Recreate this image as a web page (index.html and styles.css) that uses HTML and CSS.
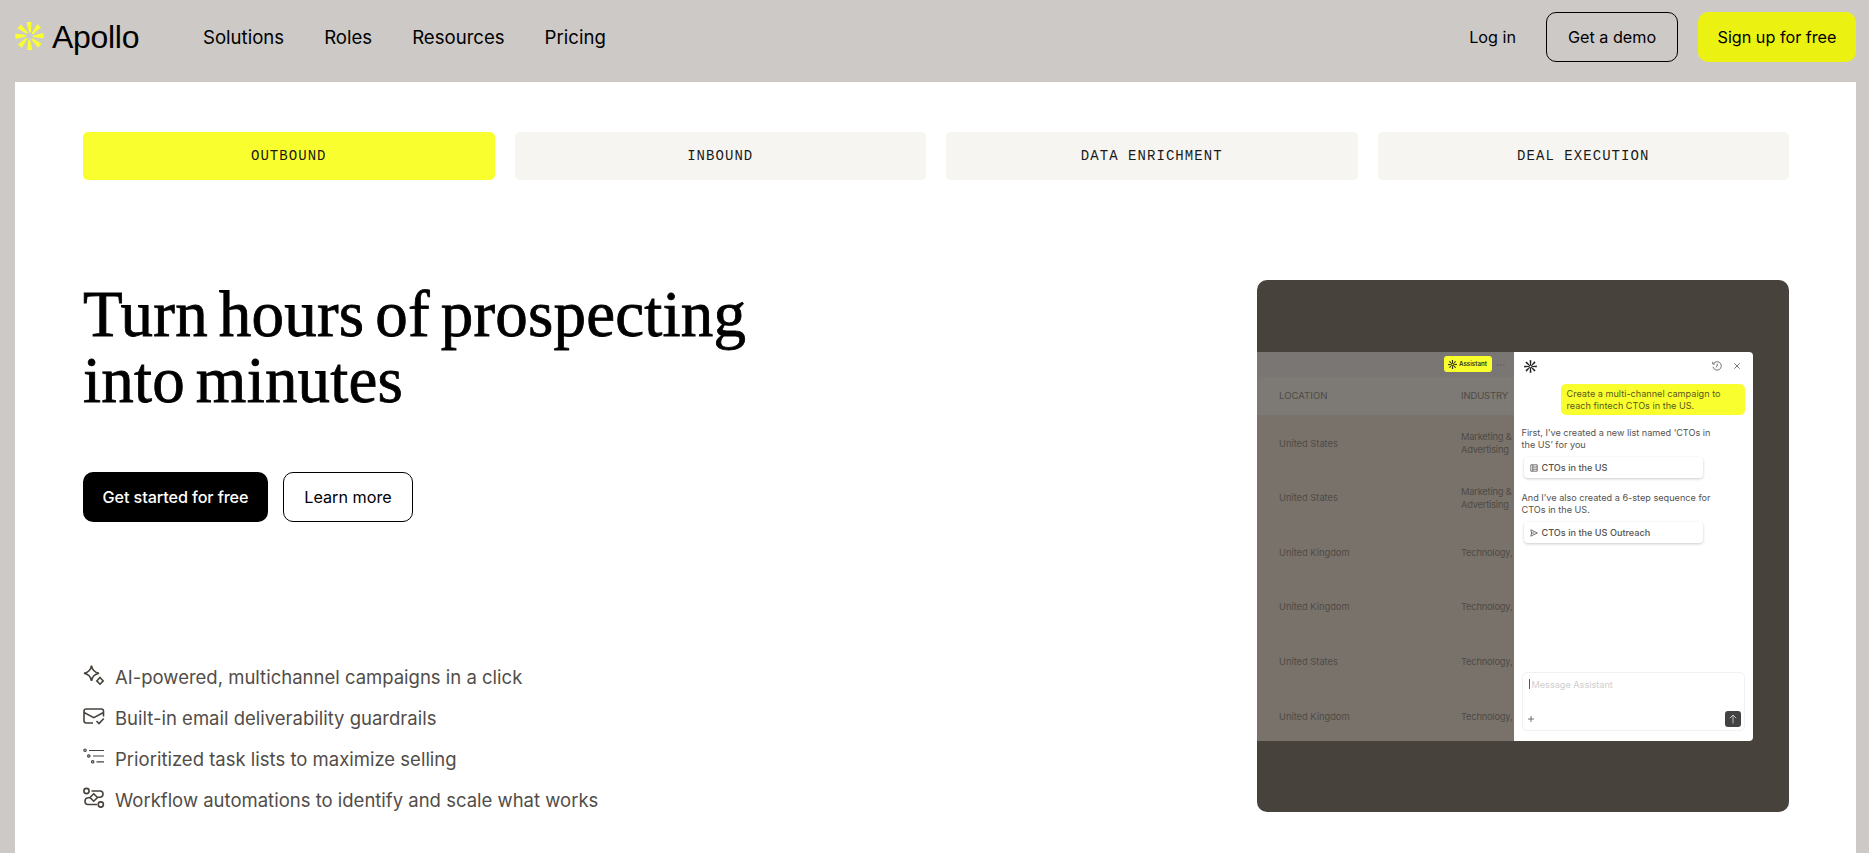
FILE: index.html
```html
<!DOCTYPE html>
<html lang="en">

<head>
    <meta charset="utf-8">
    <title>Apollo</title>
    <meta name="viewport" content="width=device-width, initial-scale=1">
    <link rel="stylesheet" href="styles.css">
</head>

<body>
<svg class="sprite" width="0" height="0">
    <defs>
        <path id="ray" d="M-3.1 -14.6 L2.2 -14.6 L1.3 -4.2 Q.6 -2.9 -.4 -3.6 Z"/>
        <path id="thin-ray" d="M-2.2 -14.6 L2 -14.6 L1.2 -2 L-.8 -2 Z"/>
        <symbol id="burst" viewBox="-15 -15 30 30">
            <use href="#ray"/>
            <use href="#ray" transform="rotate(45)"/>
            <use href="#ray" transform="rotate(90)"/>
            <use href="#ray" transform="rotate(135)"/>
            <use href="#ray" transform="rotate(180)"/>
            <use href="#ray" transform="rotate(225)"/>
            <use href="#ray" transform="rotate(270)"/>
            <use href="#ray" transform="rotate(315)"/>
        </symbol>
        <symbol id="burst-small" viewBox="-15 -15 30 30">
            <use href="#thin-ray"/>
            <use href="#thin-ray" transform="rotate(45)"/>
            <use href="#thin-ray" transform="rotate(90)"/>
            <use href="#thin-ray" transform="rotate(135)"/>
            <use href="#thin-ray" transform="rotate(180)"/>
            <use href="#thin-ray" transform="rotate(225)"/>
            <use href="#thin-ray" transform="rotate(270)"/>
            <use href="#thin-ray" transform="rotate(315)"/>
        </symbol>
    </defs>
</svg>

<header class="header">
    <a class="logo" href="#">
        <svg class="logo-mark"><use href="#burst"/></svg>
        <span class="logo-name">Apollo</span>
    </a>
    <nav class="nav">
        <a href="#">Solutions</a>
        <a href="#">Roles</a>
        <a href="#">Resources</a>
        <a href="#">Pricing</a>
    </nav>
    <div class="header-actions">
        <a class="login" href="#">Log in</a>
        <a class="btn btn-outline demo" href="#">Get a demo</a>
        <a class="btn btn-yellow" href="#">Sign up for free</a>
    </div>
</header>

<main class="panel">
    <div class="tabs">
        <div class="tab active">OUTBOUND</div>
        <div class="tab">INBOUND</div>
        <div class="tab">DATA ENRICHMENT</div>
        <div class="tab">DEAL EXECUTION</div>
    </div>

    <div class="content">
        <div class="copy">
            <h1 class="title">Turn hours of prospecting<br>into minutes</h1>
            <div class="buttons">
                <a class="btn btn-black" href="#">Get started for free</a>
                <a class="btn btn-outline learn" href="#">Learn more</a>
            </div>
            <ul class="features">
                <li>
                    <svg class="icon" viewBox="0 0 22 22">
                        <path d="M8.500 1.500Q9.500 8 16 9.300Q9.500 10.600 8.500 17Q7.500 10.600 1 9.300Q7.500 8 8.500 1.500Z"/>
                        <path d="M17 13.500L20.200 16.900L17 20.200L13.800 16.900Z"/>
                    </svg>
                    <span>AI-powered, multichannel campaigns in a click</span>
                </li>
                <li>
                    <svg class="icon" viewBox="0 0 22 22">
                        <path d="M10 18H3.200Q1 18 1 15.800V6.200Q1 4 3.200 4H18.500Q20.500 4 20.500 6.200V11.500M1 7.500L10.800 12.700L20.500 7.500M13.500 16L16 18.500L20.800 13.500"/>
                    </svg>
                    <span>Built-in email deliverability guardrails</span>
                </li>
                <li>
                    <svg class="icon thin" viewBox="0 0 22 22">
                        <circle cx="2" cy="4.200" r="1.200"/>
                        <circle cx="5.800" cy="10" r="1.200"/>
                        <circle cx="9.700" cy="15.800" r="1.200"/>
                        <path d="M6 4.500H21M10 10H21M13.500 15.800H21"/>
                    </svg>
                    <span>Prioritized task lists to maximize selling</span>
                </li>
                <li>
                    <svg class="icon" viewBox="0 0 22 22">
                        <circle cx="3.500" cy="4" r="2.600"/>
                        <circle cx="17.800" cy="17.500" r="2.600"/>
                        <path d="M8.500 4H17Q20 4 20 7Q20 10 16.500 10.300H14.500M14 17.500H5Q2 17.500 2 14.500Q2 11 5 10.800H7M10.700 6.800L14.500 10.500L10.700 14.200L7 10.500Z"/>
                    </svg>
                    <span>Workflow automations to identify and scale what works</span>
                </li>
            </ul>
        </div>

        <div class="visual">
            <div class="app">
                <div class="table">
                    <div class="table-bar">
                        <div class="assistant"><svg><use href="#burst-small"/></svg>Assistant</div>
                        <svg class="more" viewBox="0 0 8 2"><path d="M0 1H1.500M3 1H4.500M6 1H7.500"/></svg>
                    </div>
                    <div class="row head"><span>LOCATION</span><span>INDUSTRY</span></div>
                    <div class="row"><span>United States</span><span>Marketing &amp;<br>Advertising</span></div>
                    <div class="row"><span>United States</span><span>Marketing &amp;<br>Advertising</span></div>
                    <div class="row"><span>United Kingdom</span><span>Technology,</span></div>
                    <div class="row"><span>United Kingdom</span><span>Technology,</span></div>
                    <div class="row"><span>United States</span><span>Technology,</span></div>
                    <div class="row"><span>United Kingdom</span><span>Technology,</span></div>
                </div>
                <div class="chat">
                    <div class="chat-top">
                        <svg class="chat-logo"><use href="#burst-small"/></svg>
                        <svg class="history" viewBox="0 0 10 10"><path d="M1.600 2.600A4.200 4.200 0 1 1 1 5.800M.7 .8V3H3M5.200 2.700V5.200L3.800 6.300"/></svg>
                        <svg class="close" viewBox="0 0 6 6"><path d="M.3 .3L5.700 5.700M5.700 .3L.3 5.700"/></svg>
                    </div>
                    <div class="bubble">Create a multi-channel campaign to<br>reach fintech CTOs in the US.</div>
                    <p class="reply">First, I’ve created a new list named ‘CTOs in<br>the US’ for you</p>
                    <div class="chip">
                        <svg viewBox="0 0 8 8"><path d="M.8 .8H7.200V7.200H.8ZM2.800 .8V7.200M2.800 3H7.200M2.800 5.200H7.200"/></svg>
                        CTOs in the US
                    </div>
                    <p class="reply second">And I’ve also created a 6-step sequence for<br>CTOs in the US.</p>
                    <div class="chip">
                        <svg viewBox="0 0 8 8"><path d="M.8 .8L7.400 4L.8 7.200L1.600 4ZM1.600 4H4.500"/></svg>
                        CTOs in the US Outreach
                    </div>
                    <div class="message">
                        <div class="placeholder">Message Assistant</div>
                        <div class="message-actions">
                            <svg class="plus" viewBox="0 0 6 6"><path d="M3 0V6M0 3H6"/></svg>
                            <div class="send"><svg viewBox="0 0 8 10"><path d="M4 9.500V1M.8 4.200L4 1L7.200 4.200"/></svg></div>
                        </div>
                    </div>
                </div>
            </div>
        </div>
    </div>
</main>
</body>

</html>
```
FILE: styles.css
```css
* {
    box-sizing: border-box;
}

body {
    margin: 0;
    height: 853px;
    overflow: hidden;
    background: #cdc9c6;
    font-family: Inter, "Liberation Sans", sans-serif;
    color: #000;
}

a {
    color: inherit;
    text-decoration: none;
}

.sprite {
    display: block;
}

.header {
    display: flex;
    align-items: center;
    height: 82px;
    padding: 0 13px 8px 15px;
}

.logo {
    display: flex;
    align-items: center;
    width: 188px;
}

.logo-mark {
    width: 29px;
    height: 30px;
    margin-top: -3px;
    fill: #f9ff2e;
}

.logo-name {
    margin: -1px 0 0 8px;
    font-family: "Liberation Sans", sans-serif;
    font-size: 32px;
    line-height: 36px;
    letter-spacing: -0.3px;
}

.nav {
    display: flex;
    gap: 40px;
    font-size: 18.600px;
}

.header-actions {
    display: flex;
    align-items: center;
    margin-left: auto;
}

.login {
    margin-right: 30px;
    font-size: 16.200px;
}

.btn {
    display: flex;
    align-items: center;
    justify-content: center;
    height: 50px;
    border-radius: 10px;
    font-size: 16.200px;
}

.btn-outline {
    border: 1px solid #000;
}

.demo {
    width: 132px;
    margin-right: 20px;
}

.btn-yellow {
    width: 158px;
    background: #ebf212;
}

.btn-black {
    width: 185px;
    background: #000;
    color: #fff;
    font-weight: 500;
    letter-spacing: -0.100px;
}

.learn {
    width: 130px;
}

.panel {
    height: 771px;
    margin: 0 13px 0 15px;
    padding: 50px 67px 0 68px;
    background: #fff;
}

.tabs {
    display: grid;
    grid-template-columns: repeat(4, 1fr);
    gap: 20px;
}

.tab {
    height: 48px;
    border-radius: 5px;
    background: #f6f5f1;
    color: #1a1a1a;
    font-family: "Liberation Mono", monospace;
    font-size: 14px;
    line-height: 49px;
    letter-spacing: 1.050px;
    text-align: center;
}

.tab.active {
    background: #f9ff2e;
}

.content {
    display: flex;
    justify-content: space-between;
    margin-top: 100px;
}

.title {
    margin: 1px 0 0;
    font-family: "Liberation Serif", serif;
    font-size: 65px;
    font-weight: 400;
    line-height: 66px;
    letter-spacing: 0.200px;
    word-spacing: -5.500px;
    white-space: nowrap;
    -webkit-text-stroke: 0.8px #000;
}

.buttons {
    display: flex;
    gap: 15px;
    margin-top: 59px;
}

.features {
    margin: 134px 0 0;
    padding: 0;
    list-style: none;
    color: #514d48;
}

.features li {
    display: flex;
    align-items: center;
    height: 41px;
    font-size: 18.500px;
}

.icon {
    width: 22px;
    height: 22px;
    margin: -3px 10px 0 0;
    fill: none;
    stroke: #47423b;
    stroke-width: 1.600;
}

.icon.thin {
    stroke-width: 1.200;
}

.visual {
    width: 532px;
    height: 532px;
    padding: 72px 36px 72px 0;
    border-radius: 10px;
    background: #47423b;
}

.app {
    display: flex;
    height: 388.500px;
}

.table {
    width: 257px;
    overflow: hidden;
    background: #79726b;
    color: #4f4a45;
    font-size: 9.300px;
    line-height: 13.300px;
}

.table-bar {
    display: flex;
    align-items: center;
    height: 25px;
    background: #7a7673;
}

.assistant {
    display: flex;
    align-items: center;
    width: 48px;
    height: 16px;
    margin: -1px 0 0 187px;
    padding-left: 4px;
    border-radius: 3px;
    background: #f9ff2e;
    color: #34341c;
    font-size: 6.200px;
    font-weight: 600;
    white-space: nowrap;
}

.assistant svg {
    flex: none;
    width: 9px;
    height: 9px;
    margin-right: 2px;
    fill: #25250f;
}

.more {
    width: 8px;
    height: 2px;
    margin-left: 5px;
    stroke: #5a5652;
}

.row {
    display: grid;
    grid-template-columns: 182px 53px;
    align-items: center;
    height: 54.600px;
    padding: 3px 0 0 22px;
    white-space: nowrap;
}

.row span + span {
    letter-spacing: -0.200px;
}

.row.head {
    height: 37.500px;
    padding-top: 0;
    background: #7d7a75;
    font-size: 9.600px;
}

.chat {
    display: flex;
    flex-direction: column;
    align-items: flex-start;
    flex: 1;
    padding: 6px 8px 10px;
    border-radius: 0 4px 4px 0;
    background: #fff;
    color: #55524e;
    font-size: 9.150px;
    line-height: 12px;
}

.chat svg {
    fill: none;
    stroke: #55524e;
    stroke-width: 0.800;
}

.chat-top {
    display: flex;
    align-items: center;
    width: 100%;
    height: 16px;
    padding: 0 5px 0 2px;
}

.chat .chat-logo {
    width: 13px;
    height: 13px;
    fill: #222;
    stroke: none;
}

.history {
    width: 10px;
    height: 10px;
    margin-left: auto;
}

.close {
    width: 6px;
    height: 6px;
    margin-left: 12px;
}

.bubble {
    width: 184px;
    height: 31px;
    margin: 10px 0 0 39px;
    padding: 4px 0 0 6px;
    border-radius: 5px;
    background: #f9ff2e;
    color: #5a591f;
    white-space: nowrap;
}

.reply {
    margin: 12px 0 0;
    white-space: nowrap;
}

.reply.second {
    margin-top: 14px;
}

.chip {
    display: flex;
    align-items: center;
    gap: 4px;
    width: 179px;
    height: 21px;
    margin: 6px 0 0 2px;
    padding-left: 6px;
    border-radius: 4px;
    box-shadow: 0 1px 3px rgba(0, 0, 0, 0.200);
    font-weight: 500;
}

.chip svg {
    width: 8px;
    height: 8px;
}

.message {
    display: flex;
    flex-direction: column;
    justify-content: space-between;
    width: 223.500px;
    height: 59px;
    margin-top: auto;
    padding: 6px 3px 3px 5px;
    border: 1px solid #f1f1f1;
    border-radius: 5px;
}

.placeholder {
    height: 10px;
    margin-left: 1px;
    padding-left: 2px;
    border-left: 1px solid #555;
    color: #cfcecd;
    line-height: 11px;
}

.message-actions {
    display: flex;
    align-items: center;
    justify-content: space-between;
}

.plus {
    width: 6px;
    height: 6px;
}

.send {
    display: flex;
    align-items: center;
    justify-content: center;
    width: 16px;
    height: 16px;
    border-radius: 3px;
    background: #434343;
}

.chat .send svg {
    width: 8px;
    height: 10px;
    stroke: #ddd;
}
```
